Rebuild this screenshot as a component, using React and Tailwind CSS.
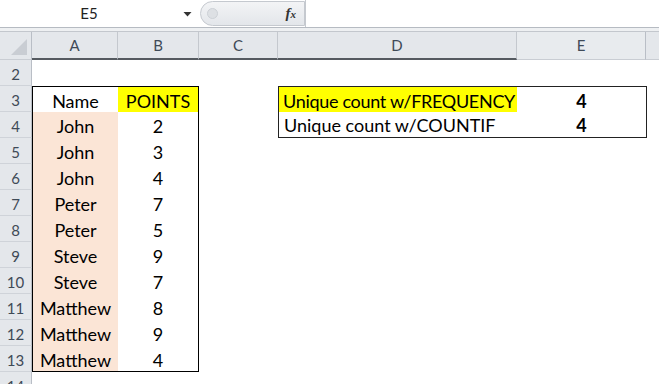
import React from "react";

const names = ["John", "John", "John", "Peter", "Peter", "Steve", "Steve", "Matthew", "Matthew", "Matthew"];
const points = [2, 3, 4, 7, 5, 9, 7, 8, 9, 4];

function RowHead({ n }) {
  return (
    <div className="w-[32px] shrink-0 h-full bg-[#e4e7eb] border-r border-[#b9bec6] border-b border-b-[#cfd3d9] flex items-center justify-center pt-[3px] text-[15px] text-[#3f4a57]">
      {n}
    </div>
  );
}

export default function App() {
  return (
    <div className="w-[659px] h-[384px] overflow-hidden bg-white" style={{ fontFamily: "Lato, 'Open Sans', sans-serif" }}>
      {/* formula bar */}
      <div className="flex h-[28px] border-b border-[#b6bbc2] bg-white">
        <div className="w-[200px] flex items-center">
          <div className="w-[176px] text-center text-[15px] text-[#222] pl-[2px]">E5</div>
          <svg width="9" height="6" viewBox="0 0 9 6" className="ml-[7px]">
            <path d="M0.5 1 L8.5 1 L4.5 5.5 Z" fill="#333" />
          </svg>
        </div>
        <div className="w-[105px] flex items-center rounded-l-[14px] border border-[#c5c9cf] bg-gradient-to-b from-[#f3f4f6] to-[#e3e6ea] my-[1px]">
          <div className="w-[11px] h-[11px] rounded-full bg-[#dde0e4] border border-[#cdd1d6] ml-[6px]" />
          <div className="flex-1" />
          <span className="mr-[8px] text-[15px] italic font-bold text-[#333]" style={{ fontFamily: "'Liberation Serif', serif" }}>
            f<span className="text-[11px]">x</span>
          </span>
        </div>
        <div className="flex-1 border-l border-[#c5c9cf]" />
      </div>
      <div className="h-[4px] bg-[#eef0f2] border-b border-[#c3c7cd]" />

      {/* column headers */}
      <div className="flex h-[28px] bg-[#e4e7eb] text-[15px] text-[#3f4a57]">
        <div className="w-[32px] shrink-0 border-r border-[#b9bec6] border-b border-b-[#c9cdd3] flex items-end justify-end pr-[4px] pb-[4px]">
          <svg width="16" height="16" viewBox="0 0 16 16">
            <path d="M16 0 L16 16 L0 16 Z" fill="#c9cdd3" />
          </svg>
        </div>
        <div className="w-[86px] shrink-0 flex items-center justify-center border-r border-[#c4c8ce] border-b-2 border-b-[#555a60]">A</div>
        <div className="w-[81px] shrink-0 flex items-center justify-center border-r border-[#c4c8ce] border-b-2 border-b-[#555a60]">B</div>
        <div className="w-[79px] shrink-0 flex items-center justify-center border-r border-[#c4c8ce] border-b-2 border-b-[#555a60]">C</div>
        <div className="w-[239px] shrink-0 flex items-center justify-center border-r border-[#c4c8ce] border-b-2 border-b-[#555a60]">D</div>
        <div className="w-[129px] shrink-0 flex items-center justify-center border-r border-[#b9bec6] border-b border-b-[#c9cdd3] bg-[#e8ebee]">E</div>
        <div className="flex-1 border-b border-b-[#c9cdd3]" />
      </div>

      <div className="text-[18px] text-black">
        {/* row 2 */}
        <div className="flex h-[26px]">
          <RowHead n={2} />
        </div>

        {/* row 3 */}
        <div className="flex h-[26px]">
          <RowHead n={3} />
          <div className="w-[86px] shrink-0 border-l border-t border-black flex items-center justify-center pt-[3px]">Name</div>
          <div className="w-[81px] shrink-0 border-t border-r border-black bg-[#ffff00] flex items-center justify-center pt-[3px]">POINTS</div>
          <div className="w-[79px] shrink-0" />
          <div className="w-[239px] shrink-0 border-l border-t border-[#222] flex items-center">
            <span className="bg-[#ffff00] w-full h-full flex items-center pl-[4px] pt-[3px] whitespace-nowrap overflow-hidden tracking-[-0.3px]">Unique count w/FREQUENCY</span>
          </div>
          <div className="w-[130px] shrink-0 border-t border-r border-[#222] flex items-center justify-center font-bold pt-[3px]">4</div>
        </div>

        {names.map((name, i) => {
          const row = i + 4;
          const last = row === 13;
          return (
            <div key={row} className="flex h-[26px]">
              <RowHead n={row} />
              <div className={"w-[86px] shrink-0 border-l border-black bg-[#fbe5d6] flex items-center justify-center pt-[3px]" + (last ? " border-b" : "")}>
                {name}
              </div>
              <div className={"w-[81px] shrink-0 border-r border-black flex items-center justify-center pt-[3px]" + (last ? " border-b" : "")}>
                {points[i]}
              </div>
              {row === 4 && (
                <>
                  <div className="w-[79px] shrink-0" />
                  <div className="w-[239px] shrink-0 border-l border-b border-[#222] flex items-center pl-[5px] pt-[2px] whitespace-nowrap">
                    Unique count w/COUNTIF
                  </div>
                  <div className="w-[130px] shrink-0 border-r border-b border-[#222] flex items-center justify-center font-bold pt-[2px]">4</div>
                </>
              )}
            </div>
          );
        })}

        {/* row 14 */}
        <div className="flex h-[26px]">
          <RowHead n={14} />
        </div>
      </div>
    </div>
  );
}
